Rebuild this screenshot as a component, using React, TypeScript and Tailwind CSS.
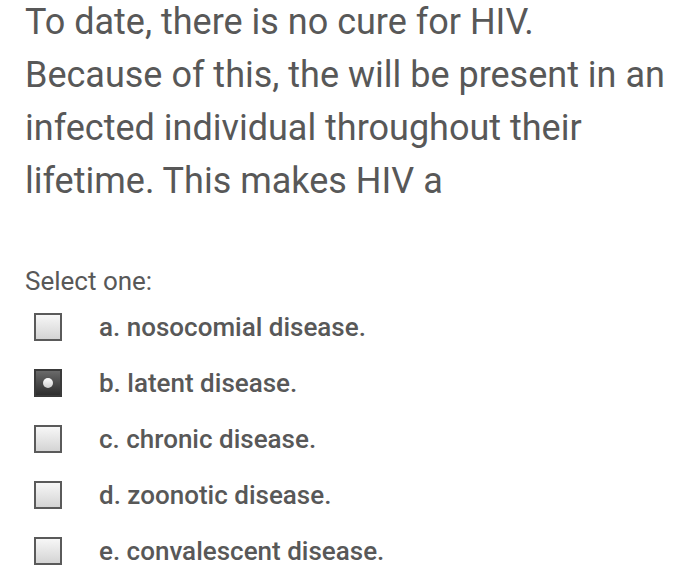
const options = [
  { key: 'a', label: 'a. nosocomial disease.' },
  { key: 'b', label: 'b. latent disease.' },
  { key: 'c', label: 'c. chronic disease.' },
  { key: 'd', label: 'd. zoonotic disease.' },
  { key: 'e', label: 'e. convalescent disease.' },
];

function Box({ checked }: { checked: boolean }) {
  if (checked) {
    return (
      <span className="flex h-[28px] w-[28px] items-center justify-center border-2 border-[#3a3a3a] bg-gradient-to-b from-[#6a6a6a] to-[#2e2e2e]">
        <span className="h-[10px] w-[10px] rounded-full bg-gradient-to-b from-white to-[#cfcfcf]" />
      </span>
    );
  }
  return (
    <span className="block h-[28px] w-[28px] border-2 border-[#5a5a5a] bg-gradient-to-b from-[#f7f7f7] to-[#d4d4d4]" />
  );
}

export default function App() {
  const selected = 'b';
  return (
    <div className="min-h-[588px] bg-white pl-[25px] pr-2 pt-[1px] font-['Roboto',sans-serif] text-[#585858]">
      <p className="-mt-[5px] text-[36px] leading-[53px]">
        To date, there is no cure for HIV.
        <br />
        Because of this, the will be present in an
        <br />
        infected individual throughout their
        <br />
        lifetime. This makes HIV a
      </p>

      <p className="mt-[58px] text-[26px] leading-[30px]">Select one:</p>

      <div className="mt-[3px] flex flex-col">
        {options.map((o) => (
          <label key={o.key} className="flex h-[56px] items-center">
            <span className="ml-[9px]">
              <Box checked={o.key === selected} />
            </span>
            <span className="ml-[37px] text-[26px] font-medium leading-[30px]">{o.label}</span>
          </label>
        ))}
      </div>
    </div>
  );
}
